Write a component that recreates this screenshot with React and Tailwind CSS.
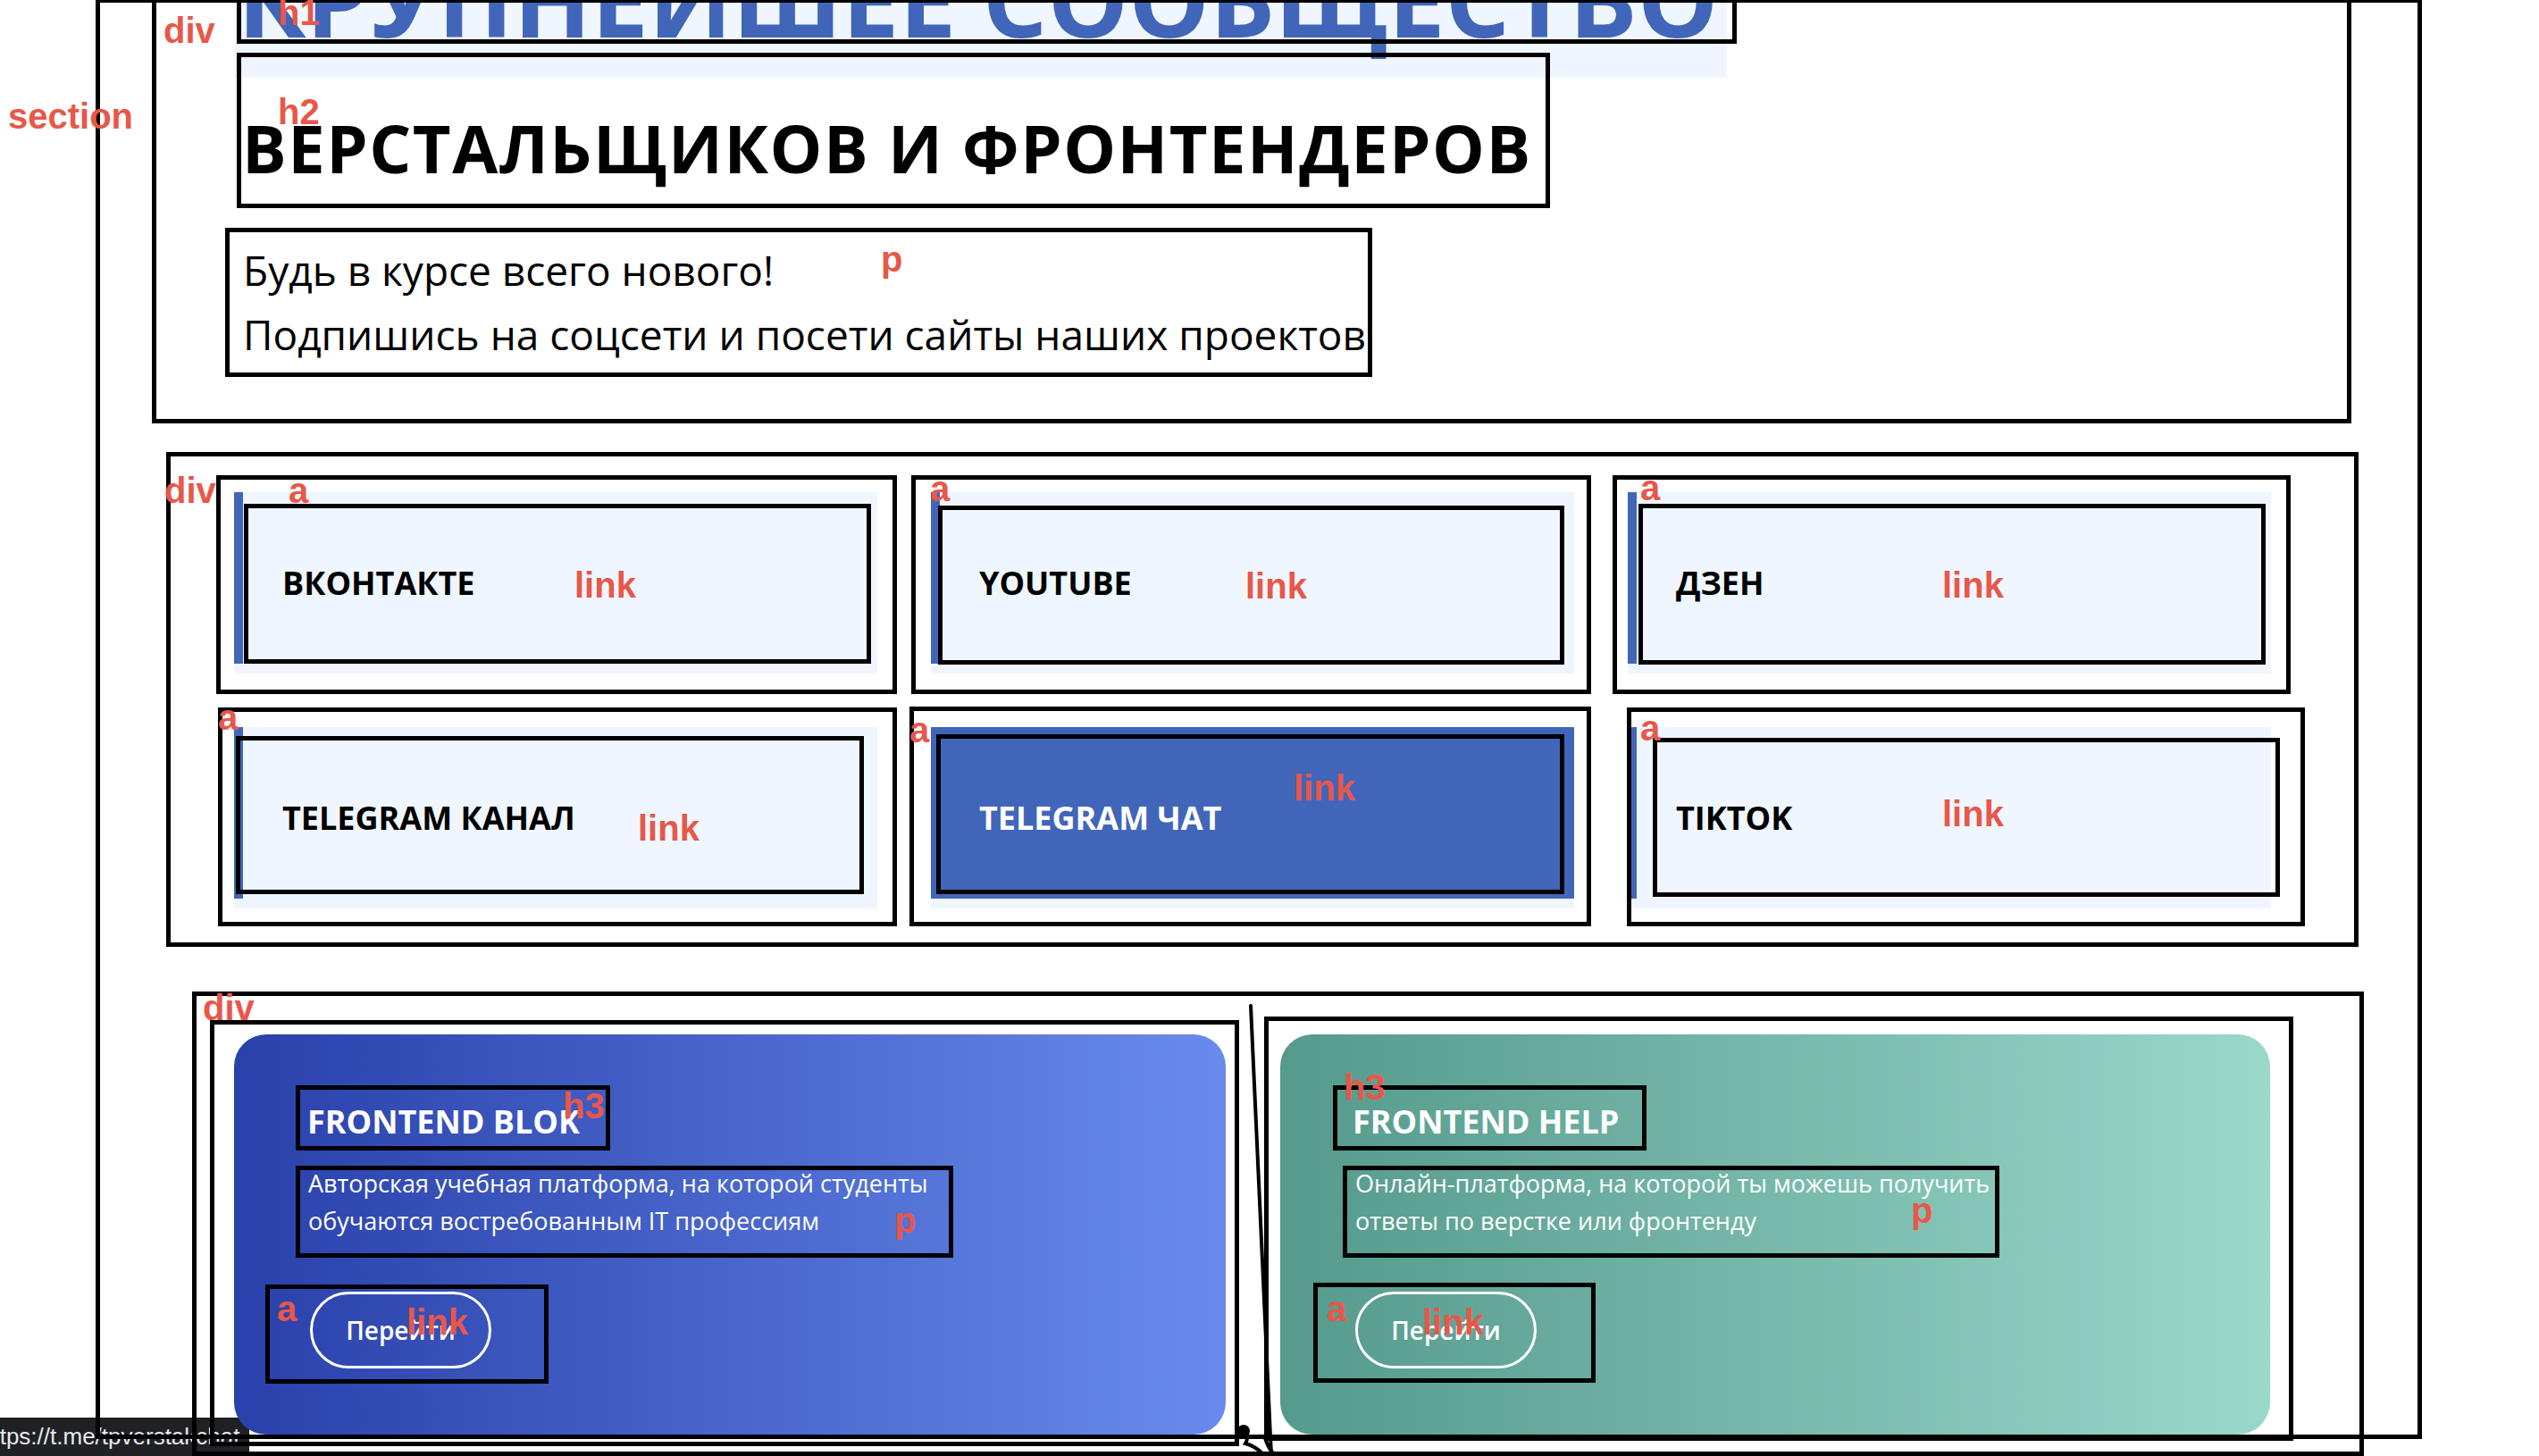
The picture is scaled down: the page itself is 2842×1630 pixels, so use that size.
import React from 'react';

const socials = [
  {
    title: 'ВКОНТАКТЕ',
    outer: 'left-[-20px] top-[-19px] h-[245px] w-[762px]',
    inner: 'left-[11px] top-[13px] h-[179px] w-[702px]',
    aTag: 'left-[61px] top-[-22px]',
    linkTag: 'left-[381px] top-[84px]',
  },
  {
    title: 'YOUTUBE',
    outer: 'left-[-22px] top-[-19px] h-[245px] w-[761px]',
    inner: 'left-[8px] top-[15px] h-[178px] w-[701px]',
    aTag: 'left-[-1px] top-[-24px]',
    linkTag: 'left-[352px] top-[85px]',
  },
  {
    title: 'ДЗЕН',
    outer: 'left-[-17px] top-[-19px] h-[245px] w-[759px]',
    inner: 'left-[12px] top-[13px] h-[180px] w-[702px]',
    aTag: 'left-[14px] top-[-25px]',
    linkTag: 'left-[352px] top-[84px]',
  },
  {
    title: 'TELEGRAM КАНАЛ',
    outer: 'left-[-18px] top-[-22px] h-[245px] w-[760px]',
    inner: 'left-[2px] top-[10px] h-[177px] w-[703px]',
    aTag: 'left-[-18px] top-[-31px]',
    linkTag: 'left-[452px] top-[93px]',
  },
  {
    title: 'TELEGRAM ЧАТ',
    active: true,
    outer: 'left-[-24px] top-[-23px] h-[246px] w-[763px]',
    inner: 'left-[6px] top-[8px] h-[179px] w-[703px]',
    aTag: 'left-[-24px] top-[-17px]',
    linkTag: 'left-[406px] top-[48px]',
  },
  {
    title: 'TIKTOK',
    outer: 'left-[-1px] top-[-22px] h-[245px] w-[759px]',
    inner: 'left-[28px] top-[12px] h-[178px] w-[702px]',
    aTag: 'left-[14px] top-[-19px]',
    linkTag: 'left-[352px] top-[77px]',
  },
];

const projects = [
  {
    title: 'FRONTEND BLOK',
    lines: ['Авторская учебная платформа, на которой студенты', 'обучаются востребованным IT профессиям'],
    card: 'w-[1110px] pl-[35px] from-[#2a40aa] to-[#6a8bed]',
    h3: 'ml-[34px] w-[352px] pl-[8px]',
    p: 'ml-[34px] mt-[17px] w-[736px]',
    a: 'mt-[30px] h-[111px] w-[317px] pl-[45px] pt-[3px]',
    h3Tag: 'left-[368px] top-[60px]',
    pTag: 'left-[739px] top-[188px]',
    aTag: 'left-[48px] top-[287px]',
    linkTag: 'left-[193px] top-[302px]',
  },
  {
    title: 'FRONTEND HELP',
    lines: ['Онлайн-платформа, на которой ты можешь получить', 'ответы по верстке или фронтенду'],
    card: 'w-[1108px] pl-[37px] from-[#559a8c] to-[#9ad8ca]',
    h3: 'ml-[22px] w-[351px] pl-[17px]',
    p: 'ml-[33px] mt-[17px] w-[735px]',
    a: 'mt-[28px] h-[112px] w-[316px] pl-[42px] pt-[5px]',
    h3Tag: 'left-[71px] top-[39px]',
    pTag: 'left-[706px] top-[177px]',
    aTag: 'left-[52px] top-[287px]',
    linkTag: 'left-[159px] top-[302px]',
  },
];

const Label = ({ className, children }) => (
  <span
    className={`pointer-events-none absolute whitespace-nowrap font-['Liberation_Sans',Arial,sans-serif] text-[40px] font-bold leading-none text-[#e8574a] ${className}`}
  >
    {children}
  </span>
);

const Outline = ({ className }) => (
  <div className={`pointer-events-none absolute border-[5px] border-black ${className}`} />
);

const SocialCard = ({ item }) => (
  <div className="relative h-[203px] w-[720px] bg-[#eff6ff]">
    <a
      href="#"
      className={`block h-[192px] border-l-[10px] border-[#4166b9] pl-[44px] pt-[84px] text-[36px] font-bold leading-none whitespace-nowrap ${
        item.active ? 'bg-[#4166b9] text-white' : 'text-black'
      }`}
    >
      {item.title}
    </a>
    <Outline className={item.outer} />
    <Outline className={item.inner} />
    <Label className={item.aTag}>a</Label>
    <Label className={item.linkTag}>link</Label>
  </div>
);

const ProjectCard = ({ item }) => (
  <div
    className={`relative flex h-[448px] shrink-0 flex-col items-start rounded-[36px] bg-linear-to-r pt-[57px] text-white ${item.card}`}
  >
    <h3 className={`h-[73px] whitespace-nowrap border-[5px] border-black pt-[18px] text-[36px] font-bold leading-none ${item.h3}`}>
      {item.title}
    </h3>
    <p className={`h-[103px] whitespace-nowrap border-[5px] border-black pl-[9px] text-[27px] leading-[42px] ${item.p}`}>
      <span className="-mt-[6px] block">
        {item.lines[0]}
        <br />
        {item.lines[1]}
      </span>
    </p>
    <a href="#" className={`block border-[5px] border-black ${item.a}`}>
      <span className="flex h-[86px] w-[203px] items-center justify-center rounded-full border-[3px] border-white text-[28px] font-semibold">
        Перейти
      </span>
    </a>
    <Label className={item.h3Tag}>h3</Label>
    <Label className={item.pTag}>p</Label>
    <Label className={item.aTag}>a</Label>
    <Label className={item.linkTag}>link</Label>
  </div>
);

const StatusBar = () => (
  <div className="absolute bottom-0 left-0 h-[43px] w-[279px] overflow-hidden rounded-tr-[10px] bg-[#202124] pt-[8px]">
    <span className="-ml-[22px] block whitespace-nowrap font-['Liberation_Sans',Arial,sans-serif] text-[26px] leading-none text-[#e8eaed]">
      https://t.me/tpverstakchat
    </span>
  </div>
);

const App = () => {
  return (
    <main className="relative h-[1630px] w-[2842px] overflow-hidden font-['Open_Sans',sans-serif] text-black">
      <StatusBar />

      <section className="relative ml-[107px] -mt-[2px] flex h-[1613px] w-[2604px] flex-col items-start">
        {/* hero */}
        <div className="ml-[63px] -mt-[68px] flex w-[2462px] shrink-0 flex-col items-start border-[5px] border-black pb-[59px]">
          <h1 className="ml-[87px] mt-[6px] w-[1671px] whitespace-nowrap bg-[#eff6ff] pb-[32px] pl-[4px] text-[114px] font-bold leading-none text-[#4166b9]">
            КРУПНЕЙШЕЕ СООБЩЕСТВО
          </h1>
          <h2 className="ml-[96px] mt-[42px] whitespace-nowrap text-[74px] font-bold leading-none tracking-[1.5px]">
            ВЕРСТАЛЬЩИКОВ И ФРОНТЕНДЕРОВ
          </h2>
          <p className="ml-[97px] mt-[63px] whitespace-nowrap text-[46px] leading-[72px]">
            Будь в курсе всего нового!
            <br />
            Подпишись на соцсети и посети сайты наших проектов
          </p>
        </div>

        {/* links */}
        <div className="ml-[79px] mt-[32px] shrink-0 border-[5px] border-black pb-[38px] pl-[71px] pr-[93px] pt-[40px]">
          <div className="grid grid-cols-[720px_720px_720px] gap-[60px]">
            {socials.map((item) => (
              <SocialCard key={item.title} item={item} />
            ))}
          </div>
        </div>

        {/* projects */}
        <div className="relative ml-[108px] mt-[50px] flex h-[520px] w-[2431px] shrink-0 gap-[61px] pl-[47px] pt-[48px]">
          {projects.map((item) => (
            <ProjectCard key={item.title} item={item} />
          ))}
          <Outline className="left-0 top-0 h-[520px] w-[2431px]" />
          <Outline className="left-[20px] top-[32px] h-[477px] w-[1152px]" />
          <Outline className="left-[1200px] top-[28px] h-[475px] w-[1152px]" />
        </div>

        <Outline className="left-0 top-0 h-[1613px] w-[2604px]" />
        <Outline className="left-[158px] top-[-38px] h-[89px] w-[1679px]" />
        <Outline className="left-[158px] top-[61px] h-[174px] w-[1470px]" />
        <Outline className="left-[145px] top-[257px] h-[167px] w-[1284px]" />
        <Label className="left-[-98px] top-[112px]">section</Label>
        <Label className="left-[76px] top-[16px]">div</Label>
        <Label className="left-[204px] top-[-4px]">h1</Label>
        <Label className="left-[204px] top-[107px]">h2</Label>
        <Label className="left-[879px] top-[272px]">p</Label>
        <Label className="left-[77px] top-[531px]">div</Label>
        <Label className="left-[120px] top-[1110px]">div</Label>
      </section>

      <svg
        className="pointer-events-none absolute left-[1370px] top-[1120px]"
        width="80"
        height="510"
        viewBox="0 0 80 510"
        fill="none"
        stroke="black"
        strokeWidth="4"
        strokeLinecap="round"
      >
        <path d="M30 6 C 36 150, 44 330, 53 508" />
        <path d="M20 478 c 6 4 8 12 4 18 c 8 2 14 6 20 12" />
        <circle cx="22" cy="482" r="5" fill="black" />
        <path d="M46 490 c 2 6 4 12 10 18" />
      </svg>
    </main>
  );
};

export default App;
